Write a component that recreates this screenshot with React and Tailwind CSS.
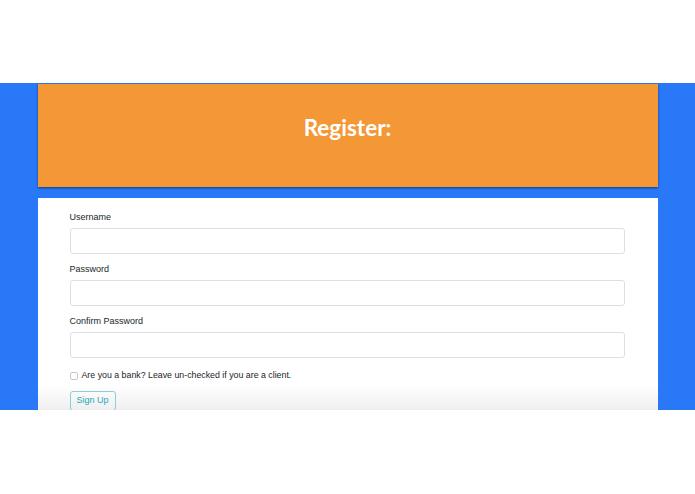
export default function App() {
  const field = (label) => (
    <div className="flex flex-col mb-[10px]">
      <label className="text-[9px] leading-[11px] text-[#212529] mb-[5px]">{label}</label>
      <div className="h-[26px] rounded-[3px] border border-[#dcdfe3] bg-white" />
    </div>
  );
  return (
    <div className="w-[695px] h-[494px] bg-white flex flex-col" style={{ fontFamily: '"Liberation Sans", Arial, sans-serif' }}>
      <div className="h-[83px] shrink-0 bg-white" />
      <div className="h-[327px] shrink-0 bg-[#2878f8] flex flex-col items-center">
        <div className="w-[620px] h-[103px] shrink-0 mt-[1px] bg-[#f49737] shadow-[0_1px_2px_rgba(0,0,0,0.5)] flex items-center justify-center pb-[16px]">
          <h1 className="text-white font-bold text-[22.5px]" style={{ fontFamily: 'Lato, "Open Sans", sans-serif' }}>Register:</h1>
        </div>
        <div className="w-[620px] mt-[11px] flex-1 bg-[linear-gradient(to_bottom,#ffffff_0%,#ffffff_88%,#eeeeee_100%)] pl-[32px] pr-[33px] pt-[14px] flex flex-col">
          {field("Username")}
          {field("Password")}
          {field("Confirm Password")}
          <div className="flex items-center gap-[4px] h-[11px] mt-[2px]">
            <div className="w-[8px] h-[8px] rounded-[2px] border border-[#c8c8c8] bg-white" />
            <span className="text-[8.8px] leading-[11px] text-[#212529]">Are you a bank? Leave un-checked if you are a client.</span>
          </div>
          <div className="mt-[5px]">
            <div className="inline-flex items-center justify-center w-[46px] h-[20px] rounded-[3px] border border-[#8ccfd9] text-[#2ba7bb] text-[9px]">Sign Up</div>
          </div>
        </div>
      </div>
      <div className="flex-1 bg-white" />
    </div>
  );
}
